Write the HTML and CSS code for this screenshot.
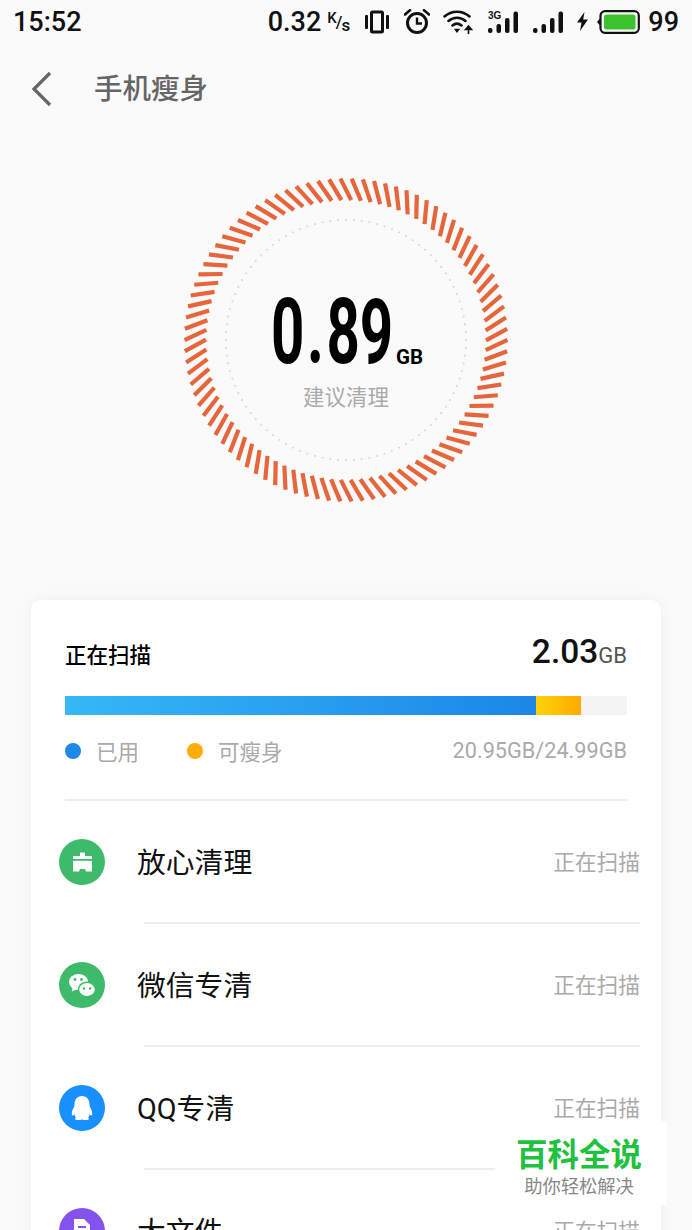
FILE: index.html
```html
<!DOCTYPE html>
<html lang="zh-CN">
<head>
    <meta charset="UTF-8">
    <meta name="viewport" content="width=device-width, initial-scale=1.0">
    <title>手机瘦身</title>
    <link rel="stylesheet" href="styles.css">
</head>
<body>
    <div class="page">
        <!-- 状态栏 -->
        <div class="status">
            <span class="clock">15:52</span>
            <div class="status-right">
                <span class="speed">0.32</span>
                <span class="speed-unit"><sup>K</sup>/<sub>s</sub></span>
                <svg class="ic-vibrate" width="24" height="24" viewBox="0 0 24 24"><rect x="6.500" y="2" width="11" height="20" rx="1" fill="none" stroke="#111" stroke-width="3"/><rect x="0" y="5" width="3" height="14" rx="1" fill="#111"/><rect x="21" y="5" width="3" height="14" rx="1" fill="#111"/></svg>
                <svg class="ic-alarm" width="26" height="25" viewBox="0 0 26 25"><circle cx="13" cy="14" r="9.500" fill="none" stroke="#111" stroke-width="3"/><path d="M13 8.500V14.500H18" fill="none" stroke="#111" stroke-width="2.400"/><path d="M1 5.500 6 1.200M25 5.500 20 1.200" stroke="#111" stroke-width="2.600" stroke-linecap="round"/></svg>
                <svg class="ic-wifi" width="30" height="25" viewBox="0 0 30 25"><path d="M1.500 7.500C8.500 1 19.500 1 26.500 7.500M5.500 12C10.500 7.500 17.500 7.500 22.500 12M9.500 16.500C12.500 14 15.500 14 18.500 16.500" fill="none" stroke="#111" stroke-width="2.500" stroke-linecap="round"/><path d="M14 24 10.800 19.800H17.200Z" fill="#111"/><path d="M25.500 25V19.500M22.500 20.500 25.500 17 28.500 20.500Z" stroke="#111" stroke-width="1.600" fill="#111"/></svg>
                <svg class="ic-signal-a" width="30" height="24" viewBox="0 0 30 24"><text class="net" x="0" y="9">3G</text><rect x="0" y="18" width="4.500" height="5" rx="2" fill="#111"/><rect x="8.500" y="14" width="4.500" height="9" rx="2" fill="#111"/><rect x="17" y="8" width="4.500" height="15" rx="2" fill="#111"/><rect x="25.500" y="1.500" width="4.500" height="21.500" rx="2" fill="#111"/></svg>
                <svg class="ic-signal-b" width="30" height="24" viewBox="0 0 30 24"><rect x="0" y="18" width="4.500" height="5" rx="2" fill="#111"/><rect x="8.500" y="14" width="4.500" height="9" rx="2" fill="#111"/><rect x="17" y="8" width="4.500" height="15" rx="2" fill="#111"/><rect x="25.500" y="1.500" width="4.500" height="21.500" rx="2" fill="#111"/></svg>
                <svg class="ic-bolt" width="11" height="19" viewBox="0 0 11 19"><path d="M7.500 0 0 10.500H4.500L3 19 11 7.500H6.200Z" fill="#111"/></svg>
                <svg class="ic-battery" width="43" height="24" viewBox="0 0 43 24"><path d="M0 12 3 8.500V15.500Z" fill="#111"/><rect x="3.500" y="1.200" width="38.300" height="21.600" rx="4.500" fill="#fff" stroke="#111" stroke-width="2.200"/><rect x="7" y="4.500" width="31.500" height="15" rx="2.500" fill="#3cc22c"/></svg>
                <span class="level">99</span>
            </div>
        </div>

        <!-- 标题栏 -->
        <div class="toolbar">
            <svg class="back" width="22" height="36" viewBox="0 0 22 36"><path d="M19 2 3 18 19 34" fill="none" stroke="#666" stroke-width="3.200"/></svg>
            <h1>手机瘦身</h1>
        </div>

        <!-- 圆环 -->
        <div class="hero">
            <div class="ring">
                <svg id="dial" width="324" height="324" viewBox="0 0 324 324"><circle class="dots" cx="162" cy="162" r="120"/></svg>
                <div class="ring-text">
                    <div class="amount"><span class="amount-num">0<span class="amount-dot">.</span>89</span><span class="amount-unit">GB</span></div>
                    <p>建议清理</p>
                </div>
            </div>
        </div>

        <!-- 卡片 -->
        <div class="card">
            <div class="card-head">
                <span class="card-title">正在扫描</span>
                <span class="total"><b>2.03</b>GB</span>
            </div>
            <div class="bar">
                <div class="bar-used"></div>
                <div class="bar-slim"></div>
            </div>
            <div class="legend">
                <i class="dot dot-blue"></i><span class="legend-a">已用</span>
                <i class="dot dot-orange"></i><span>可瘦身</span>
                <span class="legend-size">20.95GB/24.99GB</span>
            </div>

            <div class="list">
                <div class="row">
                    <span class="badge badge-green">
                        <svg width="46" height="46" viewBox="0 0 46 46"><path d="M21 13.500H26V17H33V32.500H27L26 30H21L20 32.500H14V17H21Z" fill="#fff"/><rect x="14" y="20" width="19" height="1.800" fill="#3dbb6a"/></svg>
                    </span>
                    <div class="row-body"><span class="row-name">放心清理</span><span class="row-state">正在扫描</span></div>
                </div>
                <div class="row">
                    <span class="badge badge-green">
                        <svg width="46" height="46" viewBox="0 0 46 46"><ellipse cx="19.500" cy="20" rx="9.500" ry="8" fill="#fff"/><path d="M13.500 25 13 29.500 18 27Z" fill="#fff"/><ellipse cx="28" cy="27.500" rx="8.500" ry="7.200" fill="#fff" stroke="#3dbb6a" stroke-width="1.500"/><circle cx="16" cy="17.500" r="1.400" fill="#3dbb6a"/><circle cx="22.500" cy="17.500" r="1.400" fill="#3dbb6a"/><circle cx="25" cy="26.500" r="1.200" fill="#3dbb6a"/><circle cx="31" cy="26.500" r="1.200" fill="#3dbb6a"/></svg>
                    </span>
                    <div class="row-body"><span class="row-name">微信专清</span><span class="row-state">正在扫描</span></div>
                </div>
                <div class="row">
                    <span class="badge badge-blue">
                        <svg width="46" height="46" viewBox="0 0 46 46"><path d="M23 11C28 11 30.500 15 30.500 19.500C30.500 21 31 22 32 24C33.500 27 33.500 30 32.500 30.500C31.800 30.800 31 29.800 30.500 29C30.500 30.500 30 31.500 29 32.500C30 33 30.500 34 29 35H25C24 35 23.500 34.500 23 34.500C22.500 34.500 22 35 21 35H17C15.500 34 16 33 17 32.500C16 31.500 15.500 30.500 15.500 29C15 29.800 14.200 30.800 13.500 30.500C12.500 30 12.500 27 14 24C15 22 15.500 21 15.500 19.500C15.500 15 18 11 23 11Z" fill="#fff"/></svg>
                    </span>
                    <div class="row-body"><span class="row-name">QQ专清</span><span class="row-state">正在扫描</span></div>
                </div>
                <div class="row">
                    <span class="badge badge-purple">
                        <svg width="46" height="46" viewBox="0 0 46 46"><path d="M15 11H25L31 17V35H15Z" fill="#fff"/><rect x="19" y="18" width="8" height="2" fill="#8453ee"/></svg>
                    </span>
                    <div class="row-body"><span class="row-name">大文件</span><span class="row-state">正在扫描</span></div>
                </div>
            </div>
        </div>

        <!-- 水印 -->
        <div class="mark">
            <strong>百科全说</strong>
            <span>助你轻松解决</span>
        </div>
    </div>
    <script src="ring.js"></script>
</body>
</html>
```
FILE: styles.css
```css
*{
    padding: 0;
    margin: 0;
    box-sizing: border-box;
}
html,body{
    height: 1230px;
    overflow: hidden;
}
body{
    background-color: #fafafa;
    font-family: Roboto, "Noto Sans CJK SC", sans-serif;
}
.page{
    position: relative;
    width: 692px;
    height: 1230px;
    overflow: hidden;
}

/* 状态栏 */
.status{
    height: 44px;
    padding: 0 13px 1px 13px;
    display: flex;
    align-items: center;
    justify-content: space-between;
    color: #111;
}
.clock{
    font-size: 27px;
    font-weight: 500;
}
.status-right{
    display: flex;
    align-items: center;
}
.speed{
    font-size: 27px;
    font-weight: 500;
}
.speed-unit{
    width: 25px;
    margin-left: 6px;
    margin-right: 13px;
    font-size: 17px;
    font-weight: 500;
    letter-spacing: -1px;
    white-space: nowrap;
}
.speed-unit sup{
    font-size: 15px;
    vertical-align: 5px;
    line-height: 0;
}
.speed-unit sub{
    font-size: 17px;
    vertical-align: -3px;
    line-height: 0;
}
.ic-alarm{
    margin-left: 15px;
}
.ic-wifi{
    margin-left: 13px;
}
.ic-signal-a{
    margin-left: 15px;
}
.ic-signal-b{
    margin-left: 15px;
}
.ic-bolt{
    margin-left: 14px;
}
.ic-battery{
    margin-left: 9px;
}
.net{
    font: 700 10px "Liberation Sans Narrow", "Liberation Sans", sans-serif;
    fill: #111;
}
.level{
    margin-left: 8px;
    font-size: 27px;
    font-weight: 500;
}

/* 标题栏 */
.toolbar{
    height: 90px;
    padding-left: 31px;
    display: flex;
    align-items: center;
}
.toolbar h1{
    margin-left: 41px;
    margin-bottom: 6px;
    font-size: 28.5px;
    font-weight: 500;
    color: #666;
}

/* 圆环 */
.hero{
    height: 466px;
    padding-top: 44px;
    display: flex;
    justify-content: center;
}
.ring{
    width: 324px;
    height: 324px;
    display: grid;
    place-items: center;
}
.ring>*{
    grid-area: 1 / 1;
}
.dots{
    fill: none;
    stroke: #d8d8d8;
    stroke-width: 2;
    stroke-linecap: round;
    stroke-dasharray: 0.1 7.75;
}
.tick{
    stroke: #e7653a;
    stroke-width: 4.2;
}
.ring-text{
    margin-top: 20px;
    display: flex;
    flex-direction: column;
    align-items: center;
}
.amount{
    height: 90px;
    width: 154px;
    display: flex;
    align-items: flex-end;
    color: #000;
}
.amount-num{
    display: inline-block;
    width: 125px;
    margin-left: 2px;
    font-size: 91px;
    line-height: 90px;
    font-weight: 700;
    white-space: nowrap;
    transform: scaleX(0.64);
    transform-origin: left bottom;
}
.amount-dot{
    margin: 0 4px;
}
.amount-unit{
    margin-bottom: 8px;
    font-size: 20.5px;
    line-height: 24px;
    font-weight: 700;
}
.ring-text p{
    margin-top: 6px;
    font-size: 21.5px;
    color: #aaa;
    line-height: 30px;
}

/* 卡片 */
.card{
    height: 700px;
    margin: 0 31px;
    padding: 0 34px;
    background-color: #fff;
    border-radius: 10px;
    box-shadow: 0 0 14px rgba(0,0,0,.05);
}
.card-head{
    height: 96px;
    padding-top: 30px;
    display: flex;
    align-items: flex-start;
    justify-content: space-between;
}
.card-title{
    margin-top: 11px;
    font-size: 21.5px;
    line-height: 30px;
    font-weight: 500;
    color: #000;
}
.total{
    font-size: 22px;
    line-height: 44px;
    color: #555;
}
.total b{
    font-size: 33.5px;
    font-weight: 500;
    color: #111;
}
.bar{
    height: 19px;
    background-color: #f4f4f4;
    display: flex;
}
.bar-used{
    width: 471px;
    background: linear-gradient(90deg, #35b8f6, #1b87e8);
}
.bar-slim{
    width: 45px;
    background: linear-gradient(90deg, #ffd206, #ffaa00);
}
.legend{
    height: 86px;
    padding-bottom: 13px;
    display: flex;
    align-items: center;
    border-bottom: 2px solid #eeeeee;
    font-size: 21.5px;
    color: #aaa;
}
.dot{
    width: 16px;
    height: 16px;
    border-radius: 50%;
    margin-right: 15px;
}
.dot-blue{
    background-color: #1e8ae8;
}
.dot-orange{
    background-color: #ffab0a;
}
.legend-a{
    margin-right: 48px;
}
.legend-size{
    margin-left: auto;
    font-size: 21.7px;
}

/* 列表 */
.list{
    margin: 0 -13px 0 -6px;
}
.row{
    height: 123px;
    display: flex;
    align-items: center;
}
.badge{
    flex: none;
    width: 46px;
    height: 46px;
    border-radius: 50%;
    margin-right: 39px;
    margin-bottom: 2px;
    display: block;
}
.badge svg{
    display: block;
}
.badge-green{
    background-color: #3dbb6a;
}
.badge-blue{
    background-color: #1890ff;
}
.badge-purple{
    background-color: #8453ee;
}
.row-body{
    flex: 1;
    height: 123px;
    padding-bottom: 2px;
    display: flex;
    align-items: center;
    justify-content: space-between;
    border-bottom: 2px solid #eeeeee;
}
.row-name{
    margin-left: -7px;
    font-size: 28.8px;
    color: #111;
}
.row-state{
    font-size: 21.7px;
    color: #aaa;
}

/* 水印 */
.mark{
    position: absolute;
    left: 495px;
    top: 1121px;
    width: 172px;
    height: 84px;
    background-color: #fff;
    padding: 16px 4px 0 0;
    display: flex;
    flex-direction: column;
    align-items: center;
}
.mark strong{
    font-size: 31.5px;
    line-height: 38px;
    font-weight: 700;
    color: #1fc13f;
}
.mark span{
    font-size: 18.3px;
    line-height: 24px;
    color: #888;
}
```
FILE: ring.js
```js
//生成圆环上的斜刻度
const dial=document.getElementById("dial");
const count=90;
for(let i=0;i<count;i++){
    const a=i/count*Math.PI*2;
    const b=a+0.072;//内端顺时针偏一点
    const line=document.createElementNS("http://www.w3.org/2000/svg","line");
    line.setAttribute("x1",162+161.5*Math.cos(a));
    line.setAttribute("y1",162+161.5*Math.sin(a));
    line.setAttribute("x2",162+140*Math.cos(b));
    line.setAttribute("y2",162+140*Math.sin(b));
    line.setAttribute("class","tick");
    dial.append(line);
}
```
